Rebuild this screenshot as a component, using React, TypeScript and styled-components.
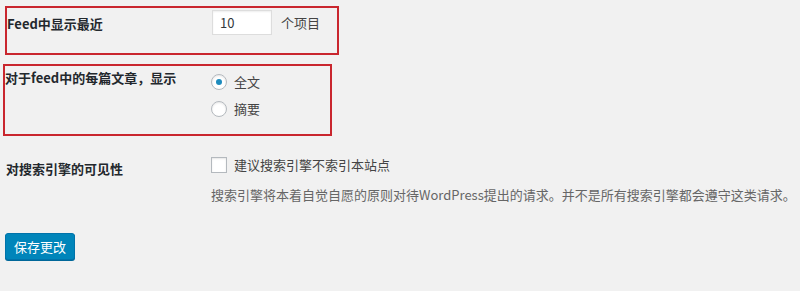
import styled, { createGlobalStyle } from "styled-components";

const GlobalStyle = createGlobalStyle`
   html, body {
      margin: 0;
      padding: 0;
      background: #f1f1f1;
   }
   body {
      font-family: "Noto Sans CJK SC", "Noto Sans", sans-serif;
      font-size: 13px;
      color: #23282d;
   }
   * {
      box-sizing: border-box;
   }
`;

const Page = styled.main`
   width: 800px;
   height: 291px;
   overflow: hidden;
   display: flex;
   flex-direction: column;
`;

// a settings row; marked rows get the red annotation frame
const Row = styled.section<{
   $marked?: boolean;
   $labelWidth: number;
   $offset: string;
   $width?: number;
   $height: number;
}>`
   display: grid;
   grid-template-columns: ${({ $labelWidth }) => $labelWidth}px 1fr;
   margin: ${({ $offset }) => $offset};
   width: ${({ $width }) => ($width ? `${$width}px` : "auto")};
   height: ${({ $height }) => $height}px;
   border: 2px solid ${({ $marked }) => ($marked ? "#c9262e" : "transparent")};
`;

const Label = styled.div<{ $top: number }>`
   padding-top: ${({ $top }) => $top}px;
   font-weight: 700;
   line-height: 18px;
   white-space: nowrap;
`;

const Field = styled.div<{ $top: number }>`
   padding-top: ${({ $top }) => $top}px;
   display: flex;
   flex-direction: column;
`;

const InlineGroup = styled.div`
   display: flex;
   align-items: center;
   gap: 9px;
`;

const NumberInput = styled.input`
   width: 60px;
   height: 25px;
   padding: 0 7px;
   border: 1px solid #ddd;
   box-shadow: inset 0 1px 2px rgba(0, 0, 0, 0.07);
   background: #fff;
   font: inherit;
   font-size: 13px;
   color: #32373c;
   &:focus {
      outline: none;
   }
`;

const Unit = styled.span`
   color: #444;
   font-size: 13px;
   line-height: 18px;
`;

const Option = styled.label`
   display: flex;
   align-items: center;
   gap: 7px;
   height: 16px;
   color: #444;
   line-height: 16px;
   & + & {
      margin-top: 11px;
   }
`;

const Radio = styled.span<{ $checked?: boolean }>`
   width: 16px;
   height: 16px;
   border-radius: 50%;
   border: 1px solid #b4b9be;
   background: #fff;
   box-shadow: inset 0 1px 2px rgba(0, 0, 0, 0.1);
   display: flex;
   align-items: center;
   justify-content: center;
   &::after {
      content: "";
      display: ${({ $checked }) => ($checked ? "block" : "none")};
      width: 6px;
      height: 6px;
      border-radius: 50%;
      background: #1e8cbe;
   }
`;

const Checkbox = styled.span`
   width: 16px;
   height: 16px;
   border: 1px solid #b4b9be;
   background: #fff;
   box-shadow: inset 0 1px 2px rgba(0, 0, 0, 0.1);
`;

const Description = styled.p`
   margin: 13px 0 0 0;
   color: #666;
   font-size: 13px;
   line-height: 18px;
   white-space: nowrap;
`;

const SaveButton = styled.button`
   width: 70px;
   height: 27px;
   margin: 0 0 0 5px;
   padding: 0;
   border: 1px solid #0073aa;
   border-radius: 3px;
   background: #0085ba;
   box-shadow: 0 1px 0 #006799;
   color: #fff;
   font: inherit;
   font-size: 13px;
   line-height: 25px;
`;

const App = () => {
   return (
      <Page>
         <GlobalStyle />
         <Row $marked $labelWidth={205} $offset="6px 0 0 5px" $width={334} $height={49}>
            <Label $top={7}>Feed中显示最近</Label>
            <Field $top={2}>
               <InlineGroup>
                  <NumberInput defaultValue="10" />
                  <Unit>个项目</Unit>
               </InlineGroup>
            </Field>
         </Row>

         <Row $marked $labelWidth={206} $offset="9px 0 0 3px" $width={329} $height={72}>
            <Label $top={3}>对于feed中的每篇文章，显示</Label>
            <Field $top={8}>
               <Option>
                  <Radio $checked />
                  全文
               </Option>
               <Option>
                  <Radio />
                  摘要
               </Option>
            </Field>
         </Row>

         <Row $labelWidth={205} $offset="17px 0 0 4px" $height={80}>
            <Label $top={5}>对搜索引擎的可见性</Label>
            <Field $top={2}>
               <Option>
                  <Checkbox />
                  建议搜索引擎不索引本站点
               </Option>
               <Description>
                  搜索引擎将本着自觉自愿的原则对待WordPress提出的请求。并不是所有搜索引擎都会遵守这类请求。
               </Description>
            </Field>
         </Row>

         <SaveButton>保存更改</SaveButton>
      </Page>
   );
};

export default App;
